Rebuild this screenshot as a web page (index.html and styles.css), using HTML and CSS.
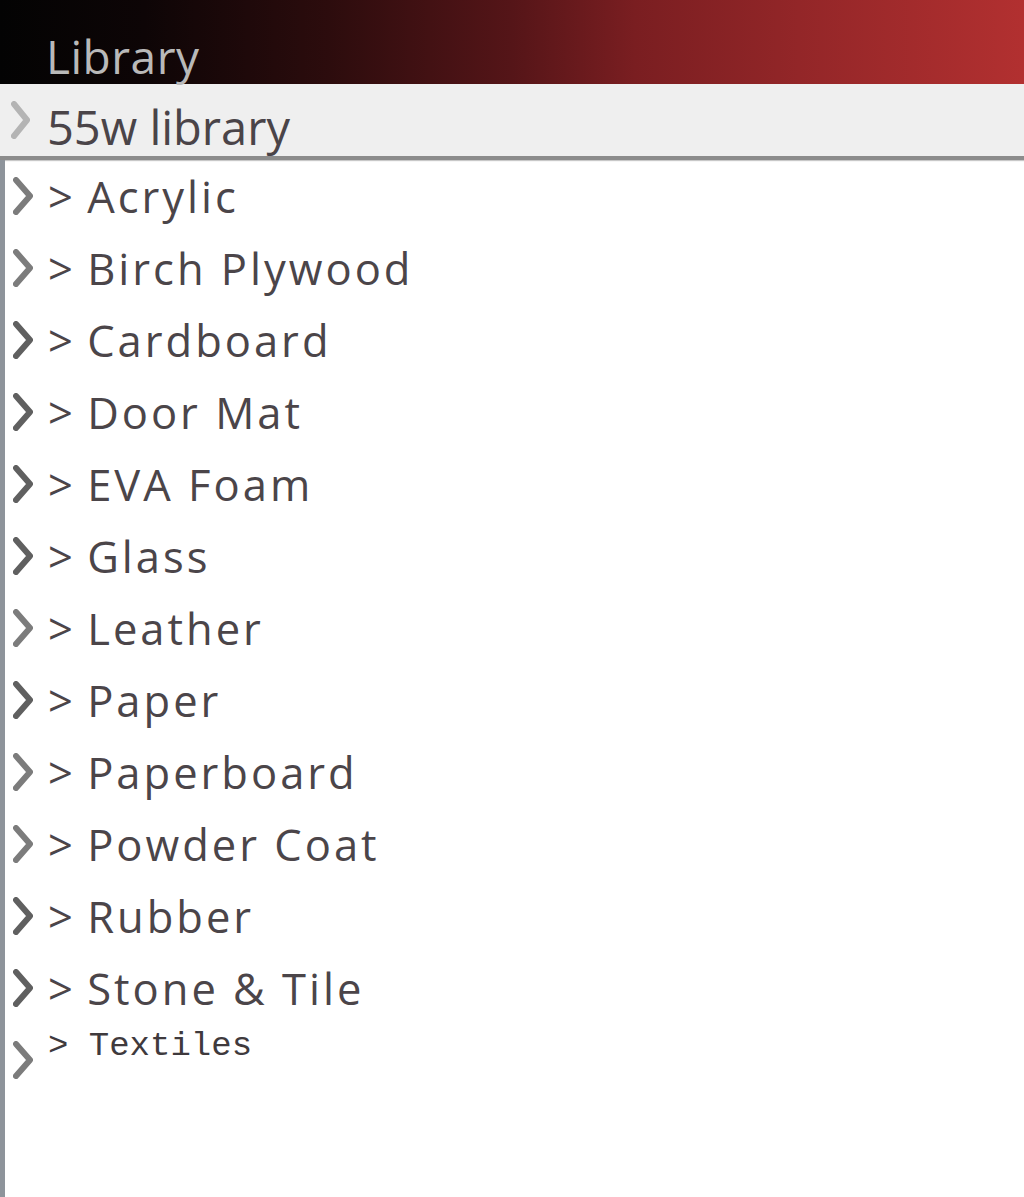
FILE: index.html
```html
<!DOCTYPE html>
<html>
<head>
<meta charset="utf-8">
<link rel="stylesheet" href="styles.css">
</head>
<body>
<div class="header"><span class="title">Library</span></div>
<div class="bar">
  <svg class="chev light" viewBox="0 0 26 40"><polyline points="4,4 17,20 4,36"/></svg>
  <span class="bar-label">55w library</span>
</div>
<ul class="list">
  <li class="row"><svg class="chev" viewBox="0 0 26 40"><polyline points="4,4 18,20 4,36"/></svg><span class="label"><span class="gt">&gt; </span>Acrylic</span></li>
  <li class="row"><svg class="chev" viewBox="0 0 26 40"><polyline points="4,4 18,20 4,36"/></svg><span class="label"><span class="gt">&gt; </span>Birch Plywood</span></li>
  <li class="row"><svg class="chev dark" viewBox="0 0 26 40"><polyline points="4,4 18,20 4,36"/></svg><span class="label"><span class="gt">&gt; </span>Cardboard</span></li>
  <li class="row"><svg class="chev dark" viewBox="0 0 26 40"><polyline points="4,4 18,20 4,36"/></svg><span class="label"><span class="gt">&gt; </span>Door Mat</span></li>
  <li class="row"><svg class="chev dark" viewBox="0 0 26 40"><polyline points="4,4 18,20 4,36"/></svg><span class="label"><span class="gt">&gt; </span>EVA Foam</span></li>
  <li class="row"><svg class="chev dark" viewBox="0 0 26 40"><polyline points="4,4 18,20 4,36"/></svg><span class="label"><span class="gt">&gt; </span>Glass</span></li>
  <li class="row"><svg class="chev" viewBox="0 0 26 40"><polyline points="4,4 18,20 4,36"/></svg><span class="label"><span class="gt">&gt; </span>Leather</span></li>
  <li class="row"><svg class="chev dark" viewBox="0 0 26 40"><polyline points="4,4 18,20 4,36"/></svg><span class="label"><span class="gt">&gt; </span>Paper</span></li>
  <li class="row"><svg class="chev" viewBox="0 0 26 40"><polyline points="4,4 18,20 4,36"/></svg><span class="label"><span class="gt">&gt; </span>Paperboard</span></li>
  <li class="row"><svg class="chev" viewBox="0 0 26 40"><polyline points="4,4 18,20 4,36"/></svg><span class="label"><span class="gt">&gt; </span>Powder Coat</span></li>
  <li class="row"><svg class="chev dark" viewBox="0 0 26 40"><polyline points="4,4 18,20 4,36"/></svg><span class="label"><span class="gt">&gt; </span>Rubber</span></li>
  <li class="row"><svg class="chev dark" viewBox="0 0 26 40"><polyline points="4,4 18,20 4,36"/></svg><span class="label"><span class="gt">&gt; </span>Stone &amp; Tile</span></li>
  <li class="row mono-row"><svg class="chev" viewBox="0 0 26 40"><polyline points="4,4 18,20 4,36"/></svg><span class="label mono">&gt; Textiles</span></li>
</ul>
</body>
</html>
```
FILE: styles.css
```css
html, body {
  margin: 0;
  padding: 0;
  background: #ffffff;
}
body {
  width: 1024px;
  height: 1197px;
  overflow: hidden;
  font-family: "Open Sans", "DejaVu Sans", sans-serif;
  color: #4b4549;
}
.header {
  height: 84px;
  box-sizing: border-box;
  padding-left: 46px;
  background: linear-gradient(to right, #030303 0%, #0d0506 14%, #2c0c0d 32%, #551518 50%, #7a1e21 62%, #932628 78%, #b23030 100%);
  display: flex;
  align-items: flex-end;
}
.title {
  font-size: 46px;
  line-height: 1;
  letter-spacing: 0.5px;
  color: #b9b9b9;
  padding-bottom: 5px;
}
.bar {
  height: 72px;
  background: #efefef;
  border-bottom: 4px solid #8c8c8c;
  box-shadow: 0 1px 1px #c8c8c8;
  display: flex;
  align-items: center;
}
.bar-label {
  font-size: 47px;
  line-height: 1;
  padding-top: 14px;
  margin-left: 11px;
  color: #4a4448;
}
.list {
  list-style: none;
  margin: 0;
  padding: 0;
  border-left: 5px solid #8e949b;
  height: 1037px;
}
.row {
  height: 72px;
  display: flex;
  align-items: center;
}
.chev {
  width: 26px;
  height: 40px;
  margin-left: 7px;
  flex: none;
  filter: blur(0.7px);
}
.chev polyline {
  fill: none;
  stroke: #7c7c7c;
  stroke-width: 6;
  stroke-linecap: round;
  stroke-linejoin: round;
}
.chev.dark polyline {
  stroke: #606060;
}
.chev.light polyline {
  stroke: #b4b4b4;
  stroke-width: 6;
}
.bar .chev {
  margin-left: 10px;
}
.label {
  font-size: 43.5px;
  line-height: 72px;
  margin-left: 10px;
  letter-spacing: 3px;
  white-space: pre;
  padding-top: 2px;
}
.gt {
  letter-spacing: 0;
  padding-right: 3px;
}
.mono-row {
  align-items: flex-start;
}
.mono-row .chev {
  margin-top: 16px;
}
.label.mono {
  font-family: "Liberation Mono", "Courier New", monospace;
  font-size: 34px;
  line-height: 1;
  letter-spacing: 0;
  padding-top: 5px;
  color: #3f3a3d;
}
```
